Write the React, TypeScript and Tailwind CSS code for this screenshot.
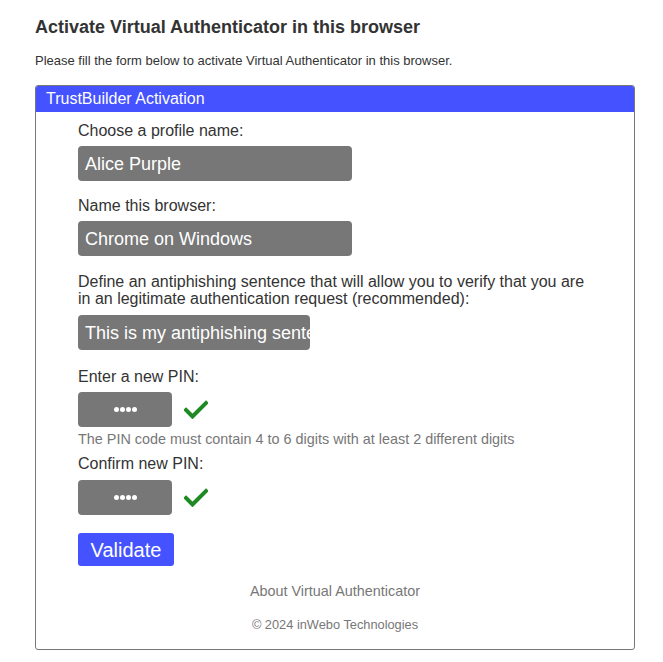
import React from "react";

function Check() {
  return (
    <svg width="24" height="19" viewBox="0 0 24 19" className="ml-3">
      <path d="M2 10 L8.5 16.5 L22 3" fill="none" stroke="#1f8a24" strokeWidth="4" strokeLinecap="square" strokeLinejoin="miter" />
    </svg>
  );
}

function Input({ value, w }: { value: string; w: string }) {
  return (
    <div className={`${w} h-[35px] bg-[#777777] rounded-[4px] flex items-center pl-[7px] overflow-hidden whitespace-nowrap text-white text-[18px]`}>
      {value}
    </div>
  );
}

function Pin() {
  return (
    <div className="flex items-center">
      <div className="w-[94px] h-[35px] bg-[#777777] rounded-[4px] flex items-center justify-center gap-[1px]">
        <span className="w-[5px] h-[5px] rounded-full bg-white" />
        <span className="w-[5px] h-[5px] rounded-full bg-white" />
        <span className="w-[5px] h-[5px] rounded-full bg-white" />
        <span className="w-[5px] h-[5px] rounded-full bg-white" />
      </div>
      <Check />
    </div>
  );
}

export default function App() {
  return (
    <div className="w-[663px] h-[662px] bg-white text-[#333333] px-[35px] pt-[16px]" style={{ fontFamily: '"Liberation Sans", Arial, sans-serif' }}>
      <h1 className="text-[18px] font-bold leading-[22px]">Activate Virtual Authenticator in this browser</h1>
      <p className="text-[13px] leading-[16px] mt-[15px]">Please fill the form below to activate Virtual Authenticator in this browser.</p>
      <div className="mt-[16px] w-[600px] h-[565px] border border-[#777777] rounded-[3px] overflow-hidden flex flex-col">
        <div className="h-[26px] bg-[#4452ff] text-white text-[16px] leading-[26px] pl-[10px]">TrustBuilder Activation</div>
        <div className="pl-[42px] pt-[10px] text-[16px] leading-[18px] flex flex-col">
          <div>Choose a profile name:</div>
          <div className="mt-[6px]"><Input value="Alice Purple" w="w-[274px]" /></div>
          <div className="mt-[16px]">Name this browser:</div>
          <div className="mt-[6px]"><Input value="Chrome on Windows" w="w-[274px]" /></div>
          <div className="mt-[17px] w-[520px] leading-[17px]">Define an antiphishing sentence that will allow you to verify that you are in an legitimate authentication request (recommended):</div>
          <div className="mt-[8px]"><Input value="This is my antiphishing sentence" w="w-[232px]" /></div>
          <div className="mt-[18px]">Enter a new PIN:</div>
          <div className="mt-[6px]"><Pin /></div>
          <div className="mt-[4px] text-[14.4px] leading-[17px] text-[#777777]">The PIN code must contain 4 to 6 digits with at least 2 different digits</div>
          <div className="mt-[7px]">Confirm new PIN:</div>
          <div className="mt-[7px]"><Pin /></div>
          <div className="mt-[18px]">
            <div className="w-[96px] h-[33px] bg-[#4452ff] rounded-[3px] text-white text-[20px] flex items-center justify-center">Validate</div>
          </div>
        </div>
        <div className="mt-[17px] text-center text-[14.4px] leading-[17px] text-[#777777]">About Virtual Authenticator</div>
        <div className="mt-[17px] text-center text-[12.8px] leading-[16px] text-[#777777]">© 2024 inWebo Technologies</div>
      </div>
    </div>
  );
}
